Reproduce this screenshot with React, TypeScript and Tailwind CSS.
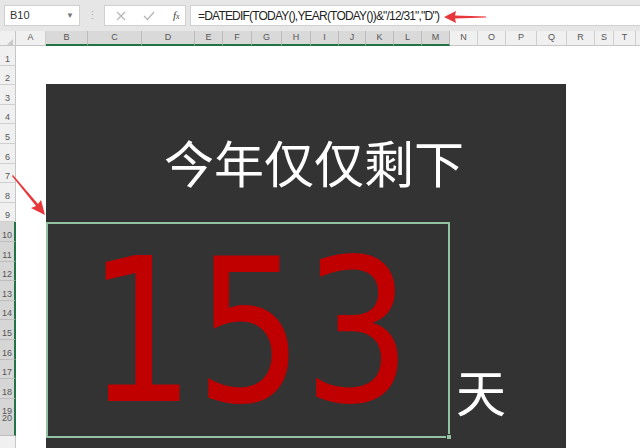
import React from "react";

const columns: { label: string; w: number; sel?: boolean }[] = [
  { label: "A", w: 30 },
  { label: "B", w: 42, sel: true },
  { label: "C", w: 54, sel: true },
  { label: "D", w: 53, sel: true },
  { label: "E", w: 28, sel: true },
  { label: "F", w: 29, sel: true },
  { label: "G", w: 30, sel: true },
  { label: "H", w: 29, sel: true },
  { label: "I", w: 28, sel: true },
  { label: "J", w: 27, sel: true },
  { label: "K", w: 28, sel: true },
  { label: "L", w: 28, sel: true },
  { label: "M", w: 28, sel: true },
  { label: "N", w: 28 },
  { label: "O", w: 28 },
  { label: "P", w: 31 },
  { label: "Q", w: 30 },
  { label: "R", w: 28 },
  { label: "S", w: 19 },
  { label: "T", w: 22 },
];

const rows = Array.from({ length: 18 }, (_, i) => i + 1);

function FormulaBar() {
  return (
    <div className="h-[31px] bg-[#e6e6e6] flex items-center">
      {/* name box */}
      <div className="ml-[4px] w-[76px] h-[21px] bg-white border border-[#d0d0d0] flex items-center justify-between pl-[5px] pr-[5px]">
        <span className="text-[11px] text-[#333]">B10</span>
        <span className="text-[8px] text-[#777]">▼</span>
      </div>
      <div className="w-[24px] flex justify-center text-[11px] text-[#aaa]">⋮</div>
      {/* cancel / enter / fx */}
      <div className="w-[82px] h-[21px] bg-white border border-[#d0d0d0] flex items-center">
        <svg width="10" height="10" viewBox="0 0 10 10" className="ml-[11px]">
          <path d="M1 1 L9 9 M9 1 L1 9" stroke="#b5b5b5" strokeWidth="1.2" />
        </svg>
        <svg width="12" height="10" viewBox="0 0 12 10" className="ml-[17px]">
          <path d="M1 5 L4.5 8.5 L11 1" stroke="#b5b5b5" strokeWidth="1.2" fill="none" />
        </svg>
        <span className="ml-[18px] text-[11px] italic text-[#444] font-['Liberation_Serif',serif]">
          f<span className="text-[8px]">x</span>
        </span>
      </div>
      {/* formula */}
      <div className="ml-[4px] flex-1 h-[21px] bg-white border border-[#d0d0d0] border-r-0 flex items-center pl-[7px]">
        <span className="text-[12px] text-[#222] tracking-[-0.8px]">
          =DATEDIF(TODAY(),YEAR(TODAY())&amp;"/12/31","D")
        </span>
      </div>
    </div>
  );
}

function ColumnHeader() {
  return (
    <div className="h-[15px] flex bg-[#f0f0f0]">
      <div className="w-[16px] border-r border-[#c6c6c6] border-b border-b-[#c6c6c6] flex items-end justify-end pr-[2px]">
        <svg width="6" height="6" viewBox="0 0 6 6">
          <path d="M6 0 L6 6 L0 6 Z" fill="#c8c8c8" />
        </svg>
      </div>
      {columns.map((c) => (
        <div
          key={c.label}
          style={{ width: c.w }}
          className={
            c.sel
              ? "shrink-0 bg-[#d9d9d9] border-r border-[#bcbcbc] border-b-2 border-b-[#217346] flex items-center justify-center text-[9px] text-[#555]"
              : "shrink-0 border-r border-[#cfcfcf] border-b border-b-[#c6c6c6] flex items-center justify-center text-[9px] text-[#555]"
          }
        >
          {c.label}
        </div>
      ))}
      <div className="flex-1 border-b border-[#c6c6c6]" />
    </div>
  );
}

function RowHeader() {
  return (
    <div className="w-[16px] shrink-0 flex flex-col bg-[#f0f0f0]">
      {rows.map((r) => (
        <div
          key={r}
          className={
            r >= 10
              ? "h-[19.6px] shrink-0 bg-[#d6d6d6] border-b border-[#bdbdbd] border-r-2 border-r-[#217346] flex items-end justify-center pb-[1px] text-[9px] leading-none text-[#555]"
              : "h-[19.6px] shrink-0 border-b border-[#cfcfcf] border-r border-r-[#c6c6c6] flex items-end justify-center pb-[1px] text-[9px] leading-none text-[#555]"
          }
        >
          {r}
        </div>
      ))}
      {/* rows 19 and 20 are squeezed, their numbers run into each other */}
      <div className="h-[37px] shrink-0 bg-[#d6d6d6] border-b border-[#bdbdbd] border-r-2 border-r-[#217346] flex flex-col items-center justify-end pb-[13px] text-[9px] leading-[7px] text-[#555]">
        <span>19</span>
        <span>20</span>
      </div>
      <div className="flex-1 border-r border-[#c6c6c6]" />
    </div>
  );
}

function Panel() {
  return (
    <div className="w-[520px] h-[400px] bg-[#333333] flex flex-col">
      <div className="pt-[52px] pl-[16px] text-center text-white text-[50px] leading-none font-['Noto_Sans_CJK_SC',sans-serif]">
        今年仅仅剩下
      </div>
      <div className="mt-[36px] flex">
        <div className="relative w-[404px] h-[216px] border-2 border-[#93c2a3]">
          <div className="pl-[39px] pt-[8px] whitespace-nowrap">
            <div className="inline-block origin-left scale-x-[0.85] text-[200px] leading-none text-[#c00000] font-['DejaVu_Sans',sans-serif]">
              153
            </div>
          </div>
          <div className="absolute -right-[4px] -bottom-[4px] w-[6px] h-[6px] bg-[#93c2a3] border border-[#333]" />
        </div>
        <div className="self-end ml-[6px] mb-[23px] text-white text-[50px] leading-none font-['Noto_Sans_CJK_SC',sans-serif]">
          天
        </div>
      </div>
    </div>
  );
}

export default function App() {
  return (
    <div className="relative w-[640px] h-[448px] overflow-hidden bg-white font-['Liberation_Sans','Noto_Sans_CJK_SC',sans-serif]">
      <FormulaBar />
      <ColumnHeader />
      <div className="flex h-[402px]">
        <RowHeader />
        <div className="flex-1 bg-white pt-[38px] pl-[30px]">
          <Panel />
        </div>
      </div>

      {/* annotation arrows */}
      <svg className="absolute left-0 top-0 pointer-events-none" width="640" height="448" viewBox="0 0 640 448">
        <polygon points="444,17 456,11 455,15.5 486,16.5 486,17.5 455,18.5 456,23" fill="#e8373a" />
        <polygon points="12,176 13,175 38,204 41,200 45,215 31,208 36,206" fill="#e8373a" />
      </svg>
    </div>
  );
}
